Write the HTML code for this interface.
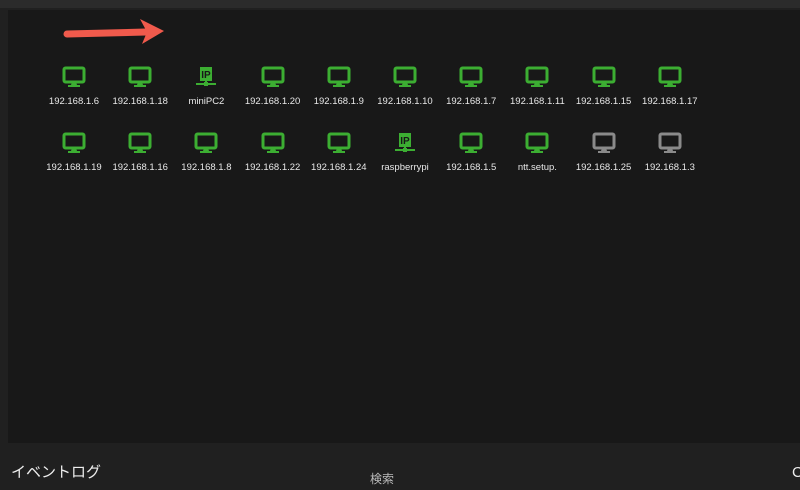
<!DOCTYPE html><html><head><meta charset="utf-8"><style>
body{margin:0;width:800px;height:490px;background:#202020;position:relative;overflow:hidden;font-family:"Liberation Sans","Noto Sans CJK JP",sans-serif}
.top{position:absolute;left:0;top:0;width:800px;height:8px;background:#2b2b2b}
.panel{position:absolute;left:8px;top:10px;width:792px;height:433px;background:#181818}
.it{position:absolute;width:66px;text-align:center;color:#e8e8e8;font-size:9.5px}
.it svg{display:block;margin:0 auto 8px}
</style></head><body>
<div class="top"></div><div class="panel"></div>
<svg style="position:absolute;left:60px;top:16px" width="110" height="30"><path d="M7 18 L86 16" stroke="#f05a4c" stroke-width="7" stroke-linecap="round"/><path d="M80 3 L104 15 L82 28 L87 16Z" fill="#f05a4c"/></svg>
<div id="g"></div>
<div style="position:absolute;left:11px;top:461px;color:#eee;font-size:15px">イベントログ</div>
<div style="position:absolute;left:370px;top:470px;color:#bbb;font-size:12px">検索</div>
<div style="position:absolute;left:792px;top:464px;color:#eee;font-size:15px">C</div>
<script>
var mon=c=>`<svg width="24" height="22" viewBox="0 0 24 22"><rect x="2" y="2" width="20" height="14" rx="1.5" fill="none" stroke="${c}" stroke-width="3"/><path d="M10 16h4l1 3h3v2H6v-2h3z" fill="${c}"/></svg>`;
var ip=c=>`<svg width="24" height="22" viewBox="0 0 24 22"><rect x="6" y="1" width="12" height="14" fill="${c}"/><text x="12" y="12" font-size="10" font-weight="bold" text-anchor="middle" fill="#181818" font-family="Liberation Sans">IP</text><rect x="11" y="14" width="2" height="4" fill="${c}"/><rect x="2" y="17" width="20" height="2" fill="${c}"/><rect x="10" y="16" width="4" height="4" fill="${c}"/></svg>`;
var G="#3cae32",Y="#8a8a8a";
var r=[["192.168.1.6","m",G],["192.168.1.18","m",G],["miniPC2","i",G],["192.168.1.20","m",G],["192.168.1.9","m",G],["192.168.1.10","m",G],["192.168.1.7","m",G],["192.168.1.11","m",G],["192.168.1.15","m",G],["192.168.1.17","m",G],
["192.168.1.19","m",G],["192.168.1.16","m",G],["192.168.1.8","m",G],["192.168.1.22","m",G],["192.168.1.24","m",G],["raspberrypi","i",G],["192.168.1.5","m",G],["ntt.setup.","m",G],["192.168.1.25","m",Y],["192.168.1.3","m",Y]];
var h="";r.forEach((d,i)=>{var col=i%10,row=Math.floor(i/10);h+=`<div class="it" style="left:${41+col*66.2}px;top:${66+row*66}px">${d[1]=="m"?mon(d[2]):ip(d[2])}${d[0]}</div>`});
document.getElementById("g").innerHTML=h;
</script></body></html>
